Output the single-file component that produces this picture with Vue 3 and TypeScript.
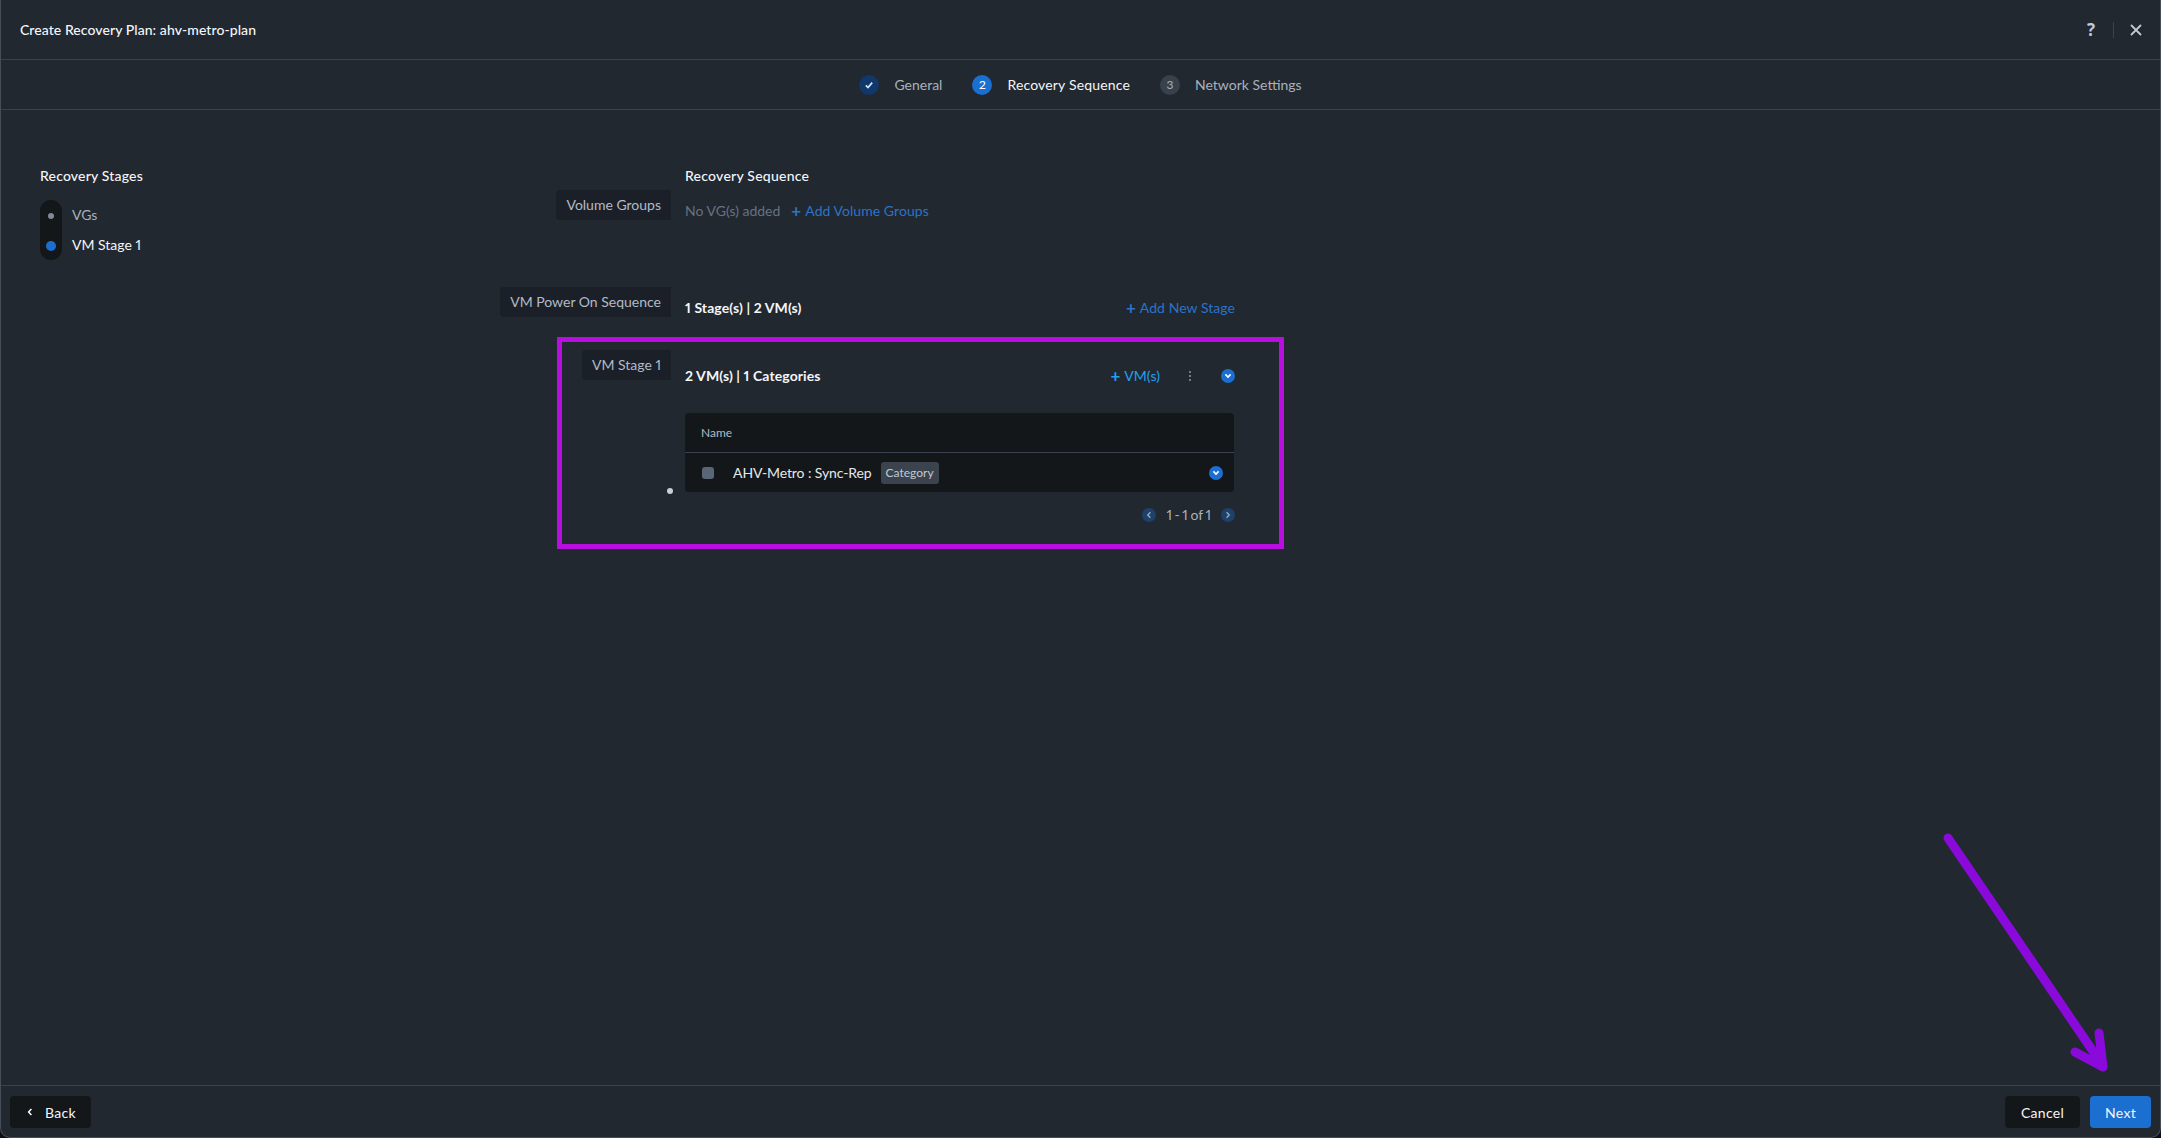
<script setup lang="ts">
interface Step {
  label: string
  state: 'done' | 'active' | 'todo'
  mark: string
}

const steps: Step[] = [
  { label: 'General', state: 'done', mark: '' },
  { label: 'Recovery Sequence', state: 'active', mark: '2' },
  { label: 'Network Settings', state: 'todo', mark: '3' }
]

const stages = [
  { label: 'VGs', active: false },
  { label: 'VM Stage 1', active: true }
]
</script>

<template>
  <div class="page">
    <header class="head">
      <h1 class="head__title">Create Recovery Plan: ahv-metro-plan</h1>
      <div class="head__tools">
        <span class="head__help">?</span>
        <span class="head__sep"></span>
        <svg class="head__close" width="12" height="12" viewBox="0 0 12 12">
          <path d="M1.5 1.5l9 9M10.5 1.5l-9 9" stroke="#c3c9d2" stroke-width="1.8" stroke-linecap="round" fill="none" />
        </svg>
      </div>
    </header>

    <nav class="stepper">
      <div v-for="step in steps" :key="step.label" class="step" :class="`step--${step.state}`">
        <span class="step__mark">
          <svg v-if="step.state === 'done'" width="10" height="10" viewBox="0 0 10 10">
            <path d="M1.8 5.4l2.2 2.2 4.2-5" stroke="#cfe4fa" stroke-width="1.7" fill="none" />
          </svg>
          <template v-else>{{ step.mark }}</template>
        </span>
        <span class="step__label">{{ step.label }}</span>
      </div>
    </nav>

    <main class="body">
      <aside class="side">
        <h2 class="heading">Recovery Stages</h2>
        <div class="stages">
          <div class="stages__rail">
            <span v-for="s in stages" :key="s.label" class="stages__dot" :class="{ 'is-active': s.active }"></span>
          </div>
          <ul class="stages__list">
            <li v-for="s in stages" :key="s.label" :class="{ 'is-active': s.active }">{{ s.label }}</li>
          </ul>
        </div>
      </aside>

      <section class="seq">
        <div class="seq__row seq__row--title">
          <div class="seq__label"></div>
          <h2 class="heading heading--wide">Recovery Sequence</h2>
        </div>

        <div class="seq__row seq__row--vg">
          <div class="seq__label"><span class="tag">Volume Groups</span></div>
          <div class="seq__main seq__line">
            <span class="muted">No VG(s) added</span>
            <span class="link"><b>+</b>Add Volume Groups</span>
          </div>
        </div>

        <div class="seq__row seq__row--power">
          <div class="seq__label"><span class="tag">VM Power On Sequence</span></div>
          <div class="seq__main seq__line seq__line--between">
            <span class="count">1 Stage(s) | 2 VM(s)</span>
            <span class="link"><b>+</b>Add New Stage</span>
          </div>
        </div>

        <div class="seq__row seq__row--stage">
          <div class="seq__label">
            <span class="tag">VM Stage 1</span>
            <span class="anchor-dot"></span>
          </div>
          <div class="seq__main">
            <div class="stage-head">
              <span class="count">2 VM(s) | 1 Categories</span>
              <div class="stage-head__tools">
                <span class="link link--bright"><b>+</b>VM(s)</span>
                <svg class="kebab" width="4" height="12" viewBox="0 0 4 12">
                  <circle cx="2" cy="2" r="1" fill="#8d96a3" />
                  <circle cx="2" cy="6" r="1" fill="#8d96a3" />
                  <circle cx="2" cy="10" r="1" fill="#8d96a3" />
                </svg>
                <span class="round">
                  <svg width="8" height="6" viewBox="0 0 8 6"><path d="M1.4 1.4L4 4l2.6-2.6" stroke="#fff" stroke-width="1.6" fill="none" /></svg>
                </span>
              </div>
            </div>

            <div class="table">
              <div class="table__head">Name</div>
              <div class="table__row">
                <span class="check"></span>
                <span class="table__name">AHV-Metro : Sync-Rep</span>
                <span class="badge">Category</span>
                <span class="round table__toggle">
                  <svg width="8" height="6" viewBox="0 0 8 6"><path d="M1.4 1.4L4 4l2.6-2.6" stroke="#fff" stroke-width="1.6" fill="none" /></svg>
                </span>
              </div>
            </div>

            <div class="pager">
              <span class="round round--dim">
                <svg width="6" height="8" viewBox="0 0 6 8"><path d="M4.4 1.2L1.8 4l2.6 2.8" stroke="#8fa6c2" stroke-width="1.5" fill="none" /></svg>
              </span>
              <span class="pager__text">1 - 1 of 1</span>
              <span class="round round--dim">
                <svg width="6" height="8" viewBox="0 0 6 8"><path d="M1.6 1.2L4.2 4 1.6 6.8" stroke="#8fa6c2" stroke-width="1.5" fill="none" /></svg>
              </span>
            </div>
          </div>
        </div>
      </section>
    </main>

    <footer class="foot">
      <button type="button" class="btn btn--dark btn--back">
        <svg width="6" height="8" viewBox="0 0 6 8"><path d="M4.4 1L1.6 4l2.8 3" stroke="#fff" stroke-width="1.5" fill="none" /></svg>
        Back
      </button>
      <div class="foot__right">
        <button type="button" class="btn btn--dark btn--cancel">Cancel</button>
        <button type="button" class="btn btn--primary">Next</button>
      </div>
    </footer>

    <!-- annotations drawn over the screen -->
    <div class="mark-box"></div>
    <svg class="mark-arrow" width="2161" height="1138" viewBox="0 0 2161 1138">
      <path d="M1948 838L2103 1066M2099 1033l4 34-28-15" stroke="#8a0adb" stroke-width="9" stroke-linecap="round" stroke-linejoin="round" fill="none" />
    </svg>
  </div>
</template>

<style>
html,
body {
  margin: 0;
  background: #0e0f12;
}
</style>

<style scoped>
.page {
  position: relative;
  box-sizing: border-box;
  height: 1138px;
  display: flex;
  flex-direction: column;
  overflow: hidden;
  background: #212830;
  border: 1px solid #474e58;
  border-top: none;
  border-radius: 0 0 10px 10px;
  color: #e4e8ee;
  font-family: Lato, "Open Sans", sans-serif;
  font-size: 14px;
  line-height: 18px;
  font-variant-numeric: proportional-nums;
}

.head {
  height: 59px;
  flex: none;
  display: flex;
  align-items: center;
  justify-content: space-between;
  padding: 0 18px 0 19px;
  border-bottom: 1px solid #3a424d;
}

.head__title {
  margin: 0;
  font-size: 14px;
  font-weight: 500;
  letter-spacing: 0.07px;
  color: #f4f6f9;
}

.head__tools {
  display: flex;
  align-items: center;
}

.head__help {
  width: 12px;
  text-align: center;
  font-size: 17px;
  font-weight: 700;
  color: #c3c9d2;
  font-family: "Open Sans", sans-serif;
}

.head__sep {
  width: 1px;
  height: 16px;
  margin: 0 16px;
  background: #3a424d;
}

.stepper {
  height: 49px;
  flex: none;
  display: flex;
  align-items: center;
  justify-content: center;
  gap: 30px;
  border-bottom: 1px solid #3a424d;
}

.step {
  display: flex;
  align-items: center;
  gap: 15px;
  color: #a9b1bd;
}

.step__mark {
  width: 20px;
  height: 20px;
  border-radius: 50%;
  display: flex;
  align-items: center;
  justify-content: center;
  font-size: 12px;
}

.step--done .step__mark {
  background: #10386a;
}

.step--active .step__mark {
  background: #1b6fd0;
  color: #fff;
}

.step--active .step__label {
  color: #f4f6f9;
  letter-spacing: 0.17px;
}

.step--todo .step__mark {
  background: #38414c;
}

.body {
  flex: 1;
  display: flex;
  min-height: 0;
}

.side {
  width: 500px;
  box-sizing: border-box;
  padding: 57px 0 0 39px;
}

.heading {
  margin: 0;
  font-size: 14px;
  font-weight: 500;
  letter-spacing: 0.18px;
  color: #f4f6f9;
}

.heading--wide {
  letter-spacing: 0.24px;
}

.stages {
  display: flex;
  gap: 10px;
  margin-top: 15px;
}

.stages__rail {
  width: 22px;
  height: 60px;
  box-sizing: border-box;
  padding-top: 13px;
  border-radius: 11px;
  background: #14171a;
  display: flex;
  flex-direction: column;
  align-items: center;
  gap: 22px;
}

.stages__dot {
  width: 6px;
  height: 6px;
  border-radius: 50%;
  background: #7f8997;
}

.stages__dot.is-active {
  width: 10px;
  height: 10px;
  background: #1b6fd0;
}

.stages__list {
  list-style: none;
  margin: 0;
  padding: 6px 0 0;
  color: #a9b1bd;
}

.stages__list li + li {
  margin-top: 12px;
}

.stages__list .is-active {
  color: #f4f6f9;
}

.seq {
  padding-top: 57px;
}

.seq__row {
  display: flex;
  gap: 14px;
}

.seq__row--vg {
  margin-top: 5px;
}

.seq__row--power {
  margin-top: 67px;
}

.seq__row--stage {
  margin-top: 33px;
}

.seq__label {
  position: relative;
  width: 170px;
  flex: none;
  height: 30px;
  display: flex;
  justify-content: flex-end;
  align-items: flex-start;
}

.seq__row--title .seq__label {
  height: auto;
}

.seq__main {
  width: 549px;
}

.seq__line {
  display: flex;
  align-items: center;
  gap: 11px;
  padding-top: 12px;
}

.seq__line--between {
  width: 550px;
  justify-content: space-between;
}

.tag {
  height: 30px;
  line-height: 30px;
  padding: 0 10px;
  border-radius: 4px 0 0 4px;
  background: #1b2028;
  color: #b3bac5;
  white-space: nowrap;
}

.muted {
  color: #677280;
}

.link {
  color: #2a74c9;
  display: flex;
  align-items: center;
  letter-spacing: 0.05px;
}

.link b {
  font-size: 17px;
  font-weight: 700;
  margin-right: 4px;
}

.link--bright {
  color: #22a0f2;
}

.count {
  font-weight: 700;
  font-size: 14px;
  letter-spacing: 0.1px;
  color: #f4f6f9;
}

.anchor-dot {
  position: absolute;
  top: 138px;
  right: -2px;
  width: 6px;
  height: 6px;
  border-radius: 50%;
  background: #c9ced6;
}

.stage-head {
  margin-right: -1px;
  padding-top: 17px;
  height: 18px;
  display: flex;
  align-items: center;
  justify-content: space-between;
}

.stage-head__tools {
  display: flex;
  align-items: center;
}

.kebab {
  margin: 0 29px 0 28px;
}

.round {
  width: 14px;
  height: 14px;
  border-radius: 50%;
  background: #1b6fd0;
  display: flex;
  align-items: center;
  justify-content: center;
  flex: none;
}

.round--dim {
  background: #1f4068;
}

.table {
  margin-top: 28px;
  border-radius: 4px;
  background: #14171a;
}

.table__head {
  height: 39px;
  line-height: 39px;
  padding: 0 16px;
  font-size: 12px;
  color: #b3bac5;
  border-bottom: 1px solid #3a424d;
}

.table__row {
  height: 39px;
  display: flex;
  align-items: center;
  padding: 0 11px 0 17px;
}

.check {
  width: 12px;
  height: 12px;
  border-radius: 3px;
  background: #5a6676;
}

.table__name {
  margin-left: 19px;
  letter-spacing: -0.1px;
  color: #e4e8ee;
}

.badge {
  margin-left: 9px;
  height: 22px;
  line-height: 22px;
  padding: 0 5px;
  border-radius: 3px;
  background: #3a434e;
  font-size: 12px;
  color: #c3c9d2;
}

.table__toggle {
  margin-left: auto;
}

.pager {
  margin-top: 14px;
  margin-right: -1px;
  display: flex;
  align-items: center;
  justify-content: flex-end;
  gap: 10px;
  color: #a9b1bd;
}

.pager__text {
  word-spacing: -1px;
}

.foot {
  height: 52px;
  flex: none;
  box-sizing: border-box;
  padding: 10px 9px 0;
  display: flex;
  justify-content: space-between;
  align-items: flex-start;
  border-top: 1px solid #3a424d;
}

.foot__right {
  display: flex;
  gap: 10px;
}

.btn {
  width: 61px;
  height: 32px;
  padding: 0;
  border: none;
  border-radius: 4px;
  font-family: inherit;
  font-size: 14px;
  letter-spacing: 0.3px;
  color: #f4f6f9;
}

.btn--dark {
  background: #14171a;
}

.btn--primary {
  background: #1b6fd0;
}

.btn--cancel {
  width: 75px;
}

.btn--back {
  width: 81px;
  display: flex;
  align-items: center;
  gap: 12px;
  padding-left: 17px;
}

.mark-box {
  position: absolute;
  left: 556px;
  top: 337px;
  width: 727px;
  height: 212px;
  box-sizing: border-box;
  border: 5px solid #b80fe0;
  pointer-events: none;
}

.mark-arrow {
  position: absolute;
  left: -1px;
  top: 0;
  pointer-events: none;
}
</style>
